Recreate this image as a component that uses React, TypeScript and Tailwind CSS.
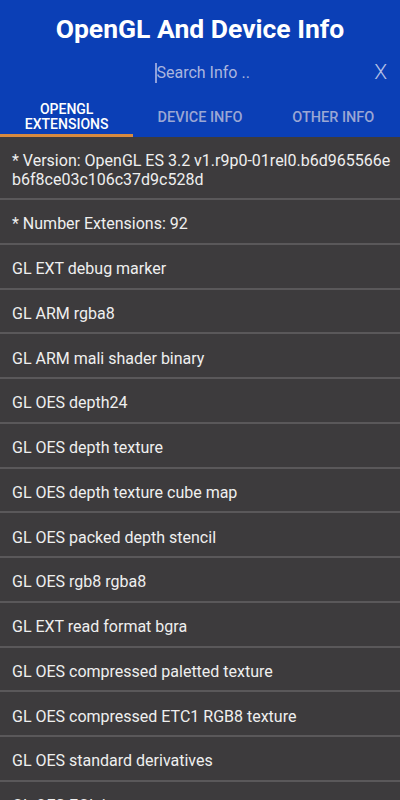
import React from 'react';

const rows: string[] = [
    'GL EXT debug marker',
    'GL ARM rgba8',
    'GL ARM mali shader binary',
    'GL OES depth24',
    'GL OES depth texture',
    'GL OES depth texture cube map',
    'GL OES packed depth stencil',
    'GL OES rgb8 rgba8',
    'GL EXT read format bgra',
    'GL OES compressed paletted texture',
    'GL OES compressed ETC1 RGB8 texture',
    'GL OES standard derivatives',
    'GL OES EGL image',
];

const App: React.FC = () => {
    return (
        <div className="h-[800px] w-[400px] overflow-hidden bg-[#3d3b3d] font-['Roboto',sans-serif] antialiased">
            {/* Header */}
            <div className="bg-[#0b3fb6]">
                <h1 className="pt-[10px] text-center text-[26.5px] font-bold leading-[38px] text-white">
                    OpenGL And Device Info
                </h1>
                <div className="flex h-[48px] items-center pt-[1px] pl-[155px] pr-[13px]">
                    <div className="h-[20px] w-[1.5px] bg-[#8fa0dc]" />
                    <span className="flex-1 text-[16px] text-[#aab5de]">Search Info ..</span>
                    <span className="text-[21px] font-light text-[#b4c0e6]">X</span>
                </div>
                <div className="grid h-[41px] grid-cols-3">
                    <div className="flex flex-col items-center justify-center border-b-[3px] border-[#d88a3f] pt-[4px] text-center text-[14px] font-medium leading-[15px] text-white">
                        <span>OPENGL</span>
                        <span>EXTENSIONS</span>
                    </div>
                    <div className="flex items-center justify-center pt-[2px] text-[14.5px] font-medium text-[#9ba7d4]">
                        DEVICE INFO
                    </div>
                    <div className="flex items-center justify-center pt-[2px] text-[14.5px] font-medium text-[#9ba7d4]">
                        OTHER INFO
                    </div>
                </div>
            </div>

            {/* List */}
            <div className="flex flex-col text-[16px] text-[#efefef]">
                <div className="flex flex-col border-b-2 border-[#5a585a] px-[12px] pt-[15px] pb-[9px] leading-[18.5px]">
                    <span className="whitespace-nowrap">* Version: OpenGL ES 3.2 v1.r9p0-01rel0.b6d965566e</span>
                    <span>b6f8ce03c106c37d9c528d</span>
                </div>
                <div className="flex h-[44.75px] items-center border-b-2 border-[#5a585a] px-[12px] pt-[6px]">
                    * Number Extensions: 92
                </div>
                {rows.map((r) => (
                    <div key={r} className="flex h-[44.75px] shrink-0 items-center border-b-2 border-[#5a585a] px-[12px] pt-[6px]">
                        {r}
                    </div>
                ))}
            </div>
        </div>
    );
};

export default App;
